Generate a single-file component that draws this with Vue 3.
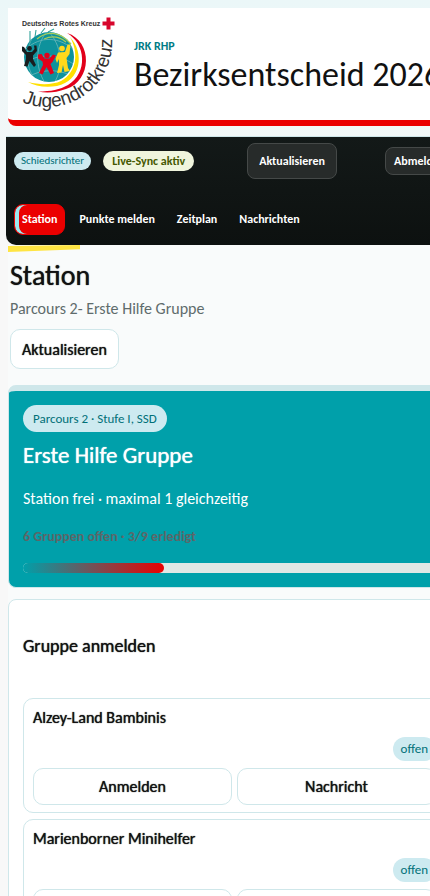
<script setup>
const tabs = ['Station', 'Punkte melden', 'Zeitplan', 'Nachrichten']
const groups = ['Alzey-Land Bambinis', 'Marienborner Minihelfer']
const done = 3
const total = 9
</script>

<template>
  <div class="page">
    <div class="shell">
      <header class="brand">
        <svg class="logo" viewBox="0 0 94 94" role="img" aria-label="Deutsches Rotes Kreuz Jugendrotkreuz">
          <defs>
            <path id="ring" d="M0 85A65 65 0 0 0 89 13" />
            <clipPath id="disc"><circle cx="27" cy="40" r="25" /></clipPath>
          </defs>
          <text class="logo-top" x="0" y="8.5">Deutsches Rotes Kreuz</text>
          <path d="M84.5 .5h4v4h4v4h-4v4h-4v-4h-4v-4h4z" fill="#d7062c" />
          <circle cx="27" cy="40" r="25" fill="#0e929c" />
          <g clip-path="url(#disc)" fill="none" stroke="#6db9bb" stroke-width=".8">
            <path d="M2 34C15 20 34 18 51 32M0 48C16 35 37 37 53 48M6 60C19 52 35 52 48 58M25 14C13 29 13 50 23 66M26 14C40 28 42 51 32 66M11 20C3 32 4 50 12 61" />
          </g>
          <path d="M8 25V14M13 20L14 13M19 16L23 11M26 15L32 12" fill="none" stroke="#32a29a" stroke-width="1.1" />
          <path d="M15 22C26 13 39 15 49 27M22 22C31 18 38 20 44 25" fill="none" stroke="#a6cd5a" stroke-width="1.3" />
          <path d="M48 20C63 36 59 64 35 69C23 71 13 69 6 65C18 68 30 68 39 64C55 55 57 36 48 20Z" fill="#ffe000" />
          <path d="M45 16C71 24 70 64 44 72C33 76 24 76 16 74.5C29 74.5 38 72.5 46 68C66 56 64 27 45 16Z" fill="#e2001a" />
          <g fill="#191d1f">
            <circle cx="7.5" cy="31.5" r="2.4" />
            <path d="M0 29.5L2 30L5 35L10 35L12.5 32L12 28.5L14.5 28.5L15 34L11 38.5L11 42L14 48L12 50L7.5 44L5.5 49.5L2 49L4 42L4 38L0 34Z" />
          </g>
          <g fill="#e2001a">
            <circle cx="25" cy="38.5" r="2.7" />
            <path d="M16 37.5L19.5 37L22.5 41.5L27.5 41.5L31 37.5L34 38.5L30.5 45L28.5 47L32 56L28.5 57.5L24.5 50L20.5 57.5L17 56L21 48L20.5 44.5L16 41.5Z" />
          </g>
          <g fill="#ffd91c">
            <circle cx="40" cy="31.5" r="2.8" />
            <path d="M33.5 42L36 35.5L43 35L45.5 27.5L48.5 27.5L47.5 37L44.5 41L46 51L48 54L42.5 55L41 48L39.5 55.5L35 56L37 48L37 42L35 46Z" />
          </g>
          <text class="logo-arc"><textPath href="#ring">Jugendrotkreuz</textPath></text>
        </svg>
        <div class="brand-text">
          <p class="eyebrow">JRK RHP</p>
          <p class="event">Bezirksentscheid 2026</p>
        </div>
      </header>

      <div class="bar">
        <div class="bar-row">
          <span class="role">Schiedsrichter</span>
          <span class="sync">Live-Sync aktiv</span>
          <div class="bar-actions">
            <button type="button" class="ghost tall">Aktualisieren</button>
            <button type="button" class="ghost">Abmelden</button>
          </div>
        </div>
        <nav class="tabs">
          <a v-for="(t, i) in tabs" :key="t" href="#" class="tab" :class="{ active: i === 0 }">{{ t }}</a>
        </nav>
      </div>

      <main class="main">
        <section class="intro">
          <h1>Station</h1>
          <p class="sub">Parcours 2- Erste Hilfe Gruppe</p>
          <button type="button" class="btn">Aktualisieren</button>
        </section>

        <section class="hero">
          <span class="pill">Parcours 2 · Stufe I, SSD</span>
          <h2>Erste Hilfe Gruppe</h2>
          <p class="state">Station frei · maximal 1 gleichzeitig</p>
          <p class="open">6 Gruppen offen · {{ done }}/{{ total }} erledigt</p>
          <div class="track"><div class="fill" :style="{ width: (done / total) * 100 + '%' }"></div></div>
        </section>

        <section class="panel">
          <h3>Gruppe anmelden</h3>
          <ul class="list">
            <li v-for="g in groups" :key="g" class="item">
              <span class="name">{{ g }}</span>
              <span class="tag">offen</span>
              <div class="pair">
                <button type="button" class="btn">Anmelden</button>
                <button type="button" class="btn">Nachricht</button>
              </div>
            </li>
          </ul>
        </section>
      </main>
    </div>
  </div>
</template>

<style>
body {
  background: #f8f8f8;
}
</style>

<style scoped>
.page {
  overflow: hidden;
  height: 100vh;
  font-family: Carlito, Calibri, Lato, sans-serif;
  font-size: 16px;
  color: #111;
  background: linear-gradient(#ebf7f8, #f8f8f8 260px);
}
.page * {
  box-sizing: border-box;
}
p, h1, h2, h3, ul {
  margin: 0;
  padding: 0;
}
button {
  font: inherit;
  color: inherit;
  white-space: nowrap;
}
.shell {
  margin: 0 -31px 0 8px;
  padding-top: 8px;
}
.brand {
  display: flex;
  gap: 18px;
  height: 118px;
  padding: 9px 14px 0;
  background: #fff;
  border-bottom: 6px solid #eb0000;
  border-radius: 0 0 8px 8px;
}
.logo {
  flex: none;
  width: 94px;
  height: 94px;
}
.logo-top {
  font: 700 7px "Liberation Sans", sans-serif;
  fill: #333;
}
.logo-arc {
  font: 19px "Liberation Sans", sans-serif;
  fill: #333;
}
.brand-text {
  padding-top: 22px;
  white-space: nowrap;
}
.eyebrow {
  font-size: 12px;
  line-height: 14px;
  font-weight: 700;
  color: #007c85;
}
.event {
  font-size: 34px;
  line-height: 44px;
}
.bar {
  margin: 11px 0 0 -2px;
  padding: 6px 8px 10px;
  background: linear-gradient(#131918, #0d1110);
  border-radius: 0 0 0 10px;
  box-shadow: 0 -1px #cfe7ea;
  color: #fff;
}
.bar-row {
  display: flex;
  align-items: center;
  gap: 12px;
}
.role,
.sync {
  border-radius: 20px;
  white-space: nowrap;
}
.role {
  padding: 0 7px;
  font-size: 11px;
  line-height: 18px;
  background: #cdeaf0;
  color: #007078;
}
.sync {
  padding: 0 9px;
  font-size: 12px;
  font-weight: 700;
  line-height: 20px;
  background: #f0f5dd;
  color: #455800;
}
.bar-actions {
  display: flex;
  align-items: center;
  gap: 48px;
  margin-left: 41px;
}
.ghost {
  height: 28px;
  padding: 0 8px;
  font-size: 12px;
  font-weight: 700;
  background: #272b2a;
  border: 1px solid #454948;
  border-radius: 8px;
}
.tall {
  height: 36px;
  padding: 0 11px;
}
.tabs {
  display: flex;
  gap: 6px;
  margin-top: 25px;
}
.tab {
  padding: 0 7px;
  font-size: 12px;
  line-height: 29px;
  font-weight: 700;
  color: #fff;
  text-decoration: none;
  border: 1px solid transparent;
  border-radius: 9px;
}
.active {
  background: #eb0000;
  border-color: #eb0000;
  box-shadow: inset 4px 0 #9de8ee;
}
.main {
  background: #f9fbfb;
}
.main::before {
  content: "";
  display: block;
  width: 72px;
  height: 7px;
  background: #ffe543;
  clip-path: polygon(0 1px, 100% 0, 100% 60%, 0 100%);
}
.intro {
  padding: 4px 2px 16px;
}
h1 {
  font-size: 28px;
  line-height: 40px;
  font-weight: 400;
  text-shadow: 0 0 1px #111;
}
.sub {
  font-size: 16px;
  line-height: 26px;
  font-weight: 300;
  color: #5f6c6c;
}
.btn {
  height: 40px;
  padding: 0 11px;
  font-size: 16px;
  text-shadow: 0 0 1px #111;
  background: #fff;
  border: 1px solid #cfe7ea;
  border-radius: 10px;
}
.intro .btn {
  display: block;
  margin-top: 7px;
}
.hero {
  padding: 14px;
  background: #00a0aa;
  border: 1px solid #cfe7ea;
  border-top-width: 6px;
  border-radius: 8px;
  color: #fff;
}
.pill {
  display: inline-block;
  padding: 0 10px;
  font-size: 13px;
  line-height: 27px;
  background: #cdeaf0;
  color: #007078;
  border-radius: 20px;
  vertical-align: top;
}
h2 {
  margin-top: 9px;
  font-size: 23px;
  line-height: 28px;
  font-weight: 400;
  text-shadow: 0 0 1px #fff;
}
.state {
  margin-top: 18px;
  font-size: 16px;
  line-height: 24px;
}
.open {
  margin-top: 14px;
  font-size: 14px;
  font-weight: 700;
  line-height: 24px;
  color: #5c6668;
}
.track {
  height: 10px;
  margin-top: 14px;
  background: #e0e8e5;
  border-radius: 8px;
}
.fill {
  height: 10px;
  background: linear-gradient(90deg, #00a0aa, #eb0000);
  border-radius: 8px;
}
.panel {
  margin-top: 11px;
  padding: 14px;
  background: #fff;
  border: 1px solid #cfe7ea;
  border-radius: 8px;
}
h3 {
  margin: 20px 0 39px;
  font-size: 18px;
  line-height: 25px;
  font-weight: 400;
  text-shadow: 0 0 1px #111;
}
.list {
  display: grid;
  gap: 6px;
  list-style: none;
}
.item {
  display: flex;
  flex-direction: column;
  padding: 8px 9px 7px;
  border: 1px solid #cfe7ea;
  border-radius: 10px;
}
.name {
  font-size: 16px;
  line-height: 22px;
  text-shadow: 0 0 1px #111;
}
.tag {
  align-self: flex-end;
  margin: 8px 0 7px;
  padding: 0 8px;
  font-size: 13px;
  line-height: 24px;
  background: #cdeaf0;
  color: #007078;
  border-radius: 20px;
}
.pair {
  display: grid;
  grid-template-columns: 1fr 1fr;
  gap: 5px;
}
.pair .btn {
  height: 37px;
}
</style>
